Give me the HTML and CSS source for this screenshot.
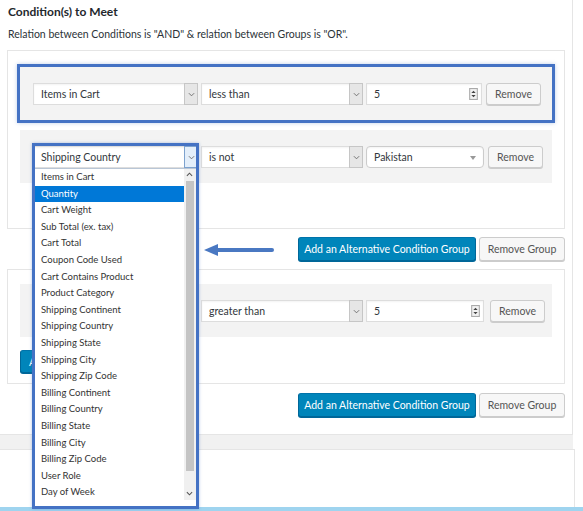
FILE: index.html
```html
<!DOCTYPE html>
<html lang="en">
<head>
  <meta charset="UTF-8">
  <title>Conditions</title>
  <link rel="stylesheet" href="styles.css">
</head>
<body>
  <div class="panel">
    <h3 class="panel-title">Condition(s) to Meet</h3>
    <p class="panel-desc">Relation between Conditions is "AND" &amp; relation between Groups is "OR".</p>

    <!-- Group 1 -->
    <div class="group group-first">
      <div class="cond-row is-marked">
        <div class="select">Items in Cart<span class="select-caret"><svg viewBox="0 0 8 5"><path d="M1 1l3 3 3-3"/></svg></span></div>
        <div class="select select-op">less than<span class="select-caret"><svg viewBox="0 0 8 5"><path d="M1 1l3 3 3-3"/></svg></span></div>
        <div class="number">5<span class="spin"><svg viewBox="0 0 8 11"><rect x="0.5" y="0.5" width="7" height="10"/><path class="tri" d="M2 4.5h4L4 2.5z M2 6.5h4L4 8.5z"/></svg></span></div>
        <button class="btn btn-remove">Remove</button>
      </div>

      <div class="cond-row">
        <div class="field-open">
          <div class="select is-focus">Shipping Country<span class="select-caret"><svg viewBox="0 0 8 5"><path d="M1 1l3 3 3-3"/></svg></span></div>
          <div class="dropdown">
            <ul class="dropdown-items">
              <li>Items in Cart</li>
              <li class="is-selected">Quantity</li>
              <li>Cart Weight</li>
              <li>Sub Total (ex. tax)</li>
              <li>Cart Total</li>
              <li>Coupon Code Used</li>
              <li>Cart Contains Product</li>
              <li>Product Category</li>
              <li>Shipping Continent</li>
              <li>Shipping Country</li>
              <li>Shipping State</li>
              <li>Shipping City</li>
              <li>Shipping Zip Code</li>
              <li>Billing Continent</li>
              <li>Billing Country</li>
              <li>Billing State</li>
              <li>Billing City</li>
              <li>Billing Zip Code</li>
              <li>User Role</li>
              <li>Day of Week</li>
            </ul>
            <div class="dropdown-scroll">
              <svg class="scroll-up" viewBox="0 0 8 5"><path d="M1 4l3-3 3 3"/></svg>
              <span class="scroll-thumb"></span>
              <svg class="scroll-down" viewBox="0 0 8 5"><path d="M1 1l3 3 3-3"/></svg>
            </div>
          </div>
        </div>
        <div class="select select-op">is not<span class="select-caret"><svg viewBox="0 0 8 5"><path d="M1 1l3 3 3-3"/></svg></span></div>
        <div class="select2">Pakistan<span class="select2-arrow"></span></div>
        <button class="btn btn-remove">Remove</button>
      </div>
    </div>

    <div class="group-actions">
      <button class="btn btn-primary btn-add-group">Add an Alternative Condition Group</button>
      <button class="btn btn-remove-group">Remove Group</button>
    </div>

    <!-- Group 2 (its first field sits under the open dropdown) -->
    <div class="group group-second">
      <div class="cond-row cond-row-wide">
        <div class="select"><span class="select-caret"><svg viewBox="0 0 8 5"><path d="M1 1l3 3 3-3"/></svg></span></div>
        <div class="select select-op">greater than<span class="select-caret"><svg viewBox="0 0 8 5"><path d="M1 1l3 3 3-3"/></svg></span></div>
        <div class="number">5<span class="spin"><svg viewBox="0 0 8 11"><rect x="0.5" y="0.5" width="7" height="10"/><path class="tri" d="M2 4.5h4L4 2.5z M2 6.5h4L4 8.5z"/></svg></span></div>
        <button class="btn btn-remove">Remove</button>
      </div>
      <button class="btn btn-primary btn-add-cond">Add Condition</button>
    </div>

    <div class="group-actions">
      <button class="btn btn-primary btn-add-group">Add an Alternative Condition Group</button>
      <button class="btn btn-remove-group">Remove Group</button>
    </div>

    <!-- callout arrow -->
    <svg class="callout-arrow" viewBox="0 0 72 14">
      <path class="shaft" d="M12 7H69"/>
      <path class="head" d="M1 7L15 1V13z"/>
    </svg>
  </div>

  <div class="page-gap"></div>
  <div class="panel-next"></div>
  <div class="footer-line"></div>
</body>
</html>
```

FILE: styles.css
```css
* {
  box-sizing: border-box;
}

body {
  margin: 0;
  background: #fff;
  font-family: Lato, "Open Sans", sans-serif;
  font-size: 10.5px;
  color: #32373c;
}

.panel {
  position: relative;
  width: 573px;
  padding: 4px 0 17px 7px;
  border-right: 1px solid #e5e5e5;
  border-bottom: 1px solid #e5e5e5;
}

.panel-title {
  margin: 0 0 6px 1px;
  font-size: 12px;
  font-weight: 700;
  line-height: 16px;
  color: #23282d;
}

.panel-desc {
  margin: 0 0 8px 1px;
  line-height: 16px;
  color: #2c3338;
}

/* Groups */
.group {
  width: 558px;
  border: 1px solid #e5e5e5;
  background: #fff;
}

.group-first {
  padding: 16px 12px 45px;
}

.group-second {
  margin-top: 8px;
  padding: 14px 12px 10px;
}

.cond-row {
  display: flex;
  align-items: center;
  gap: 3px;
  padding: 16px 8px 15px 13px;
  background: #f3f3f3;
}

.cond-row > * {
  flex-shrink: 0;
}

.cond-row + .cond-row {
  margin-top: 10px;
}

.cond-row.is-marked {
  outline: 3px solid #4472c4;
  box-shadow: 0 0 4px 3px rgba(68, 114, 196, 0.35);
}

.cond-row-wide .number {
  width: 118px;
}

.cond-row-wide .btn-remove {
  margin-left: 3px;
}

/* Fields */
.select,
.number,
.select2 {
  position: relative;
  height: 22px;
  background: #fff;
  border: 1px solid #ddd;
  padding: 0 16px 0 7px;
  line-height: 20px;
  white-space: nowrap;
  box-shadow: inset 0 1px 2px rgba(0, 0, 0, 0.05);
}

.select {
  width: 165px;
}

.select-op {
  width: 162px;
}

.number {
  width: 116px;
}

.select-caret {
  position: absolute;
  top: -1px;
  right: -1px;
  bottom: -1px;
  width: 14px;
  display: flex;
  align-items: center;
  justify-content: center;
  background: #e6e6e6;
  border: 1px solid #c6c6c6;
}

.select-caret svg {
  width: 7px;
  height: 5px;
  fill: none;
  stroke: #666;
  stroke-width: 1;
}

.select.is-focus .select-caret {
  background: #e3eefa;
  border-color: #7da2ce;
}

.spin {
  position: absolute;
  top: 4px;
  right: 3px;
}

.spin svg {
  display: block;
  width: 9px;
  height: 12px;
  fill: #f2f2f2;
  stroke: #aaa;
}

.spin .tri {
  fill: #444;
  stroke: none;
}

.select2 {
  width: 118px;
  border-color: #ccc;
  border-radius: 4px;
}

.select2-arrow {
  position: absolute;
  top: 9px;
  right: 7px;
  border-left: 3px solid transparent;
  border-right: 3px solid transparent;
  border-top: 4px solid #999;
}

/* Open dropdown */
.field-open {
  position: relative;
  z-index: 10;
  width: 165px;
}

.field-open::after {
  content: "";
  position: absolute;
  top: -3px;
  left: -1px;
  right: -1px;
  height: 360px;
  border: 3px solid #4472c4;
  pointer-events: none;
  box-shadow: 0 0 3px rgba(68, 114, 196, 0.4);
}

.dropdown {
  position: absolute;
  top: 100%;
  left: 0;
  right: 0;
  height: 332px;
  display: flex;
  background: #fff;
  border-top: 1px solid #b9c6d6;
}

.dropdown-items {
  flex: 1;
  margin: 0;
  padding: 0 0 0 2px;
  list-style: none;
  overflow: hidden;
  font-size: 9.5px;
  color: #333;
}

.dropdown-items li {
  height: 16.6px;
  line-height: 16.6px;
  padding-left: 6px;
  white-space: nowrap;
}

.dropdown-items li.is-selected {
  background: #0078d7;
  color: #fff;
}

.dropdown-scroll {
  position: relative;
  width: 12px;
  margin-right: 2px;
  background: #f0f0f0;
}

.scroll-thumb {
  position: absolute;
  top: 12px;
  left: 2px;
  right: 2px;
  height: 290px;
  background: #c4c4c4;
}

.scroll-up,
.scroll-down {
  position: absolute;
  left: 2px;
  width: 7px;
  height: 5px;
  fill: none;
  stroke: #555;
  stroke-width: 1.2;
}

.scroll-up {
  top: 3px;
}

.scroll-down {
  bottom: 4px;
}

/* Buttons */
.btn {
  height: 22px;
  padding: 0 8px;
  border: 1px solid #ccc;
  border-radius: 3px;
  background: #f7f7f7;
  box-shadow: 0 1px 0 #ccc;
  color: #555;
  font: inherit;
  white-space: nowrap;
  cursor: pointer;
}

.btn-remove {
  width: 55px;
  margin-left: 1px;
}

.btn-primary {
  background: #0085ba;
  border-color: #0073aa #006799 #006799;
  box-shadow: 0 1px 0 #006799;
  color: #fff;
}

.btn-add-cond {
  display: block;
  height: 23px;
  margin-top: 13px;
}

.group-actions {
  display: flex;
  justify-content: flex-end;
  gap: 3px;
  width: 558px;
  margin-top: 8px;
}

.group-actions + .group {
  margin-top: 8px;
}

.group-second + .group-actions {
  margin-top: 9px;
}

.group-actions .btn {
  height: 24px;
  padding: 0 4px;
}

.btn-add-group {
  width: 178px;
}

.btn-remove-group {
  width: 86px;
}

/* Callout arrow */
.callout-arrow {
  position: absolute;
  top: 243px;
  left: 203px;
  width: 72px;
  height: 14px;
}

.callout-arrow .shaft {
  stroke: #4a78c2;
  stroke-width: 4;
  stroke-linecap: round;
}

.callout-arrow .head {
  fill: #4a78c2;
}

/* Below panel */
.page-gap {
  width: 573px;
  height: 14px;
  background: #f1f1f1;
}

.panel-next {
  width: 575px;
  height: 58px;
  border-top: 1px solid #e5e5e5;
  border-right: 1px solid #e5e5e5;
}

.footer-line {
  height: 4px;
  background: #9fd4ef;
}
```
